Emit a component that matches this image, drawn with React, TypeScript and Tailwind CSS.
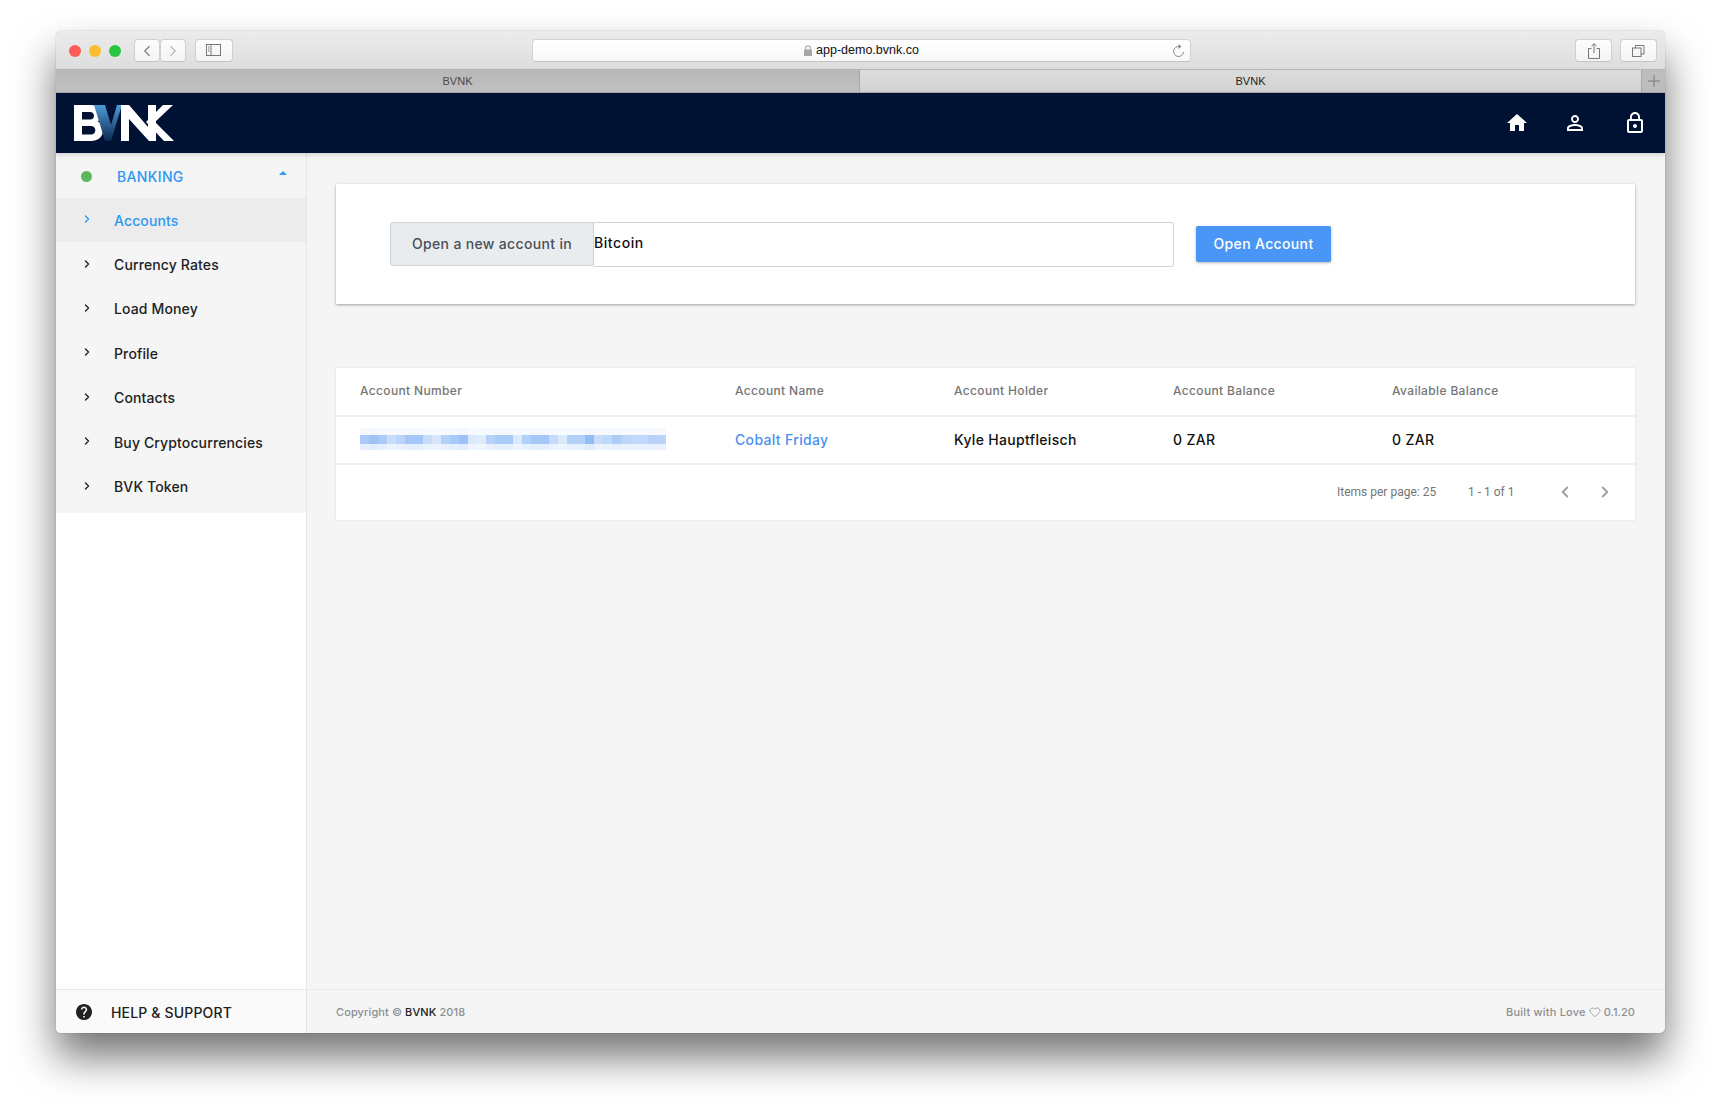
import { ChevronLeft, ChevronRight, Heart } from "lucide-react";

const menu = ["Accounts", "Currency Rates", "Load Money", "Profile", "Contacts", "Buy Cryptocurrencies", "BVK Token"];

// opacity of each pixel block of the blurred account number
const blocks = [
  0.47, 0.55, 0.47, 0.3, 0.38, 0.5, 0.5, 0.3, 0.22, 0.42, 0.47, 0.55, 0.2, 0.17, 0.4, 0.47, 0.47,
  0.2, 0.42, 0.5, 0.5, 0.33, 0.2, 0.42, 0.42, 0.6, 0.3, 0.35, 0.45, 0.37, 0.35, 0.35, 0.4,
  0.38,
];

function Logo() {
  return (
    <svg width="101" height="38" viewBox="0 0 101 38" className="block">
      <defs>
        <linearGradient id="vee" x1="0" y1="0" x2="0" y2="1">
          <stop offset="0" stopColor="#4f9ad6" />
          <stop offset="1" stopColor="#0b2a52" />
        </linearGradient>
      </defs>
      <path
        fillRule="evenodd"
        fill="#fff"
        d="M0 1h17c7 0 11 3.500 11 9 0 3.500-2 6-4.500 7.500 3.500 1.200 5.500 4.500 5.500 8.500 0 7-5 11-12 11H0z M8 8v7.500h8c2.500 0 4-1.500 4-3.800C20 9.400 18.500 8 16 8z M8 22v8.500h9c2.700 0 4.300-1.600 4.300-4.200 0-2.700-1.600-4.300-4.300-4.300z"
      />
      <path fill="url(#vee)" d="M20 1h11l6 20 6-20h5L37 37h-6z" />
      <path fill="#fff" d="M47 1h8l19 22V1h8v36h-7L55 15v22h-8z" />
      <path fill="#fff" d="M72 18 89 1h10L81 18l19 19H90z" />
    </svg>
  );
}

function Blur() {
  return (
    <svg width="306" height="22" viewBox="0 0 306 22" className="block">
      {blocks.map((o, i) => (
        <g key={i} fill="#4a8ff0">
          <rect x={i * 9} y="0" width="9" height="7" fillOpacity={0.03 + o * 0.05} />
          <rect x={i * 9} y="7" width="9" height="9" fillOpacity={o} />
          <rect x={i * 9} y="16" width="9" height="6" fillOpacity={0.05 + o * 0.2} />
        </g>
      ))}
    </svg>
  );
}

function ToolButton({ className, children }: { className: string; children: React.ReactNode }) {
  return (
    <div className={`h-[23px] rounded-[4px] bg-gradient-to-b from-[#fdfdfd] to-[#f3f3f3] border border-[#d0d0d0] border-b-[#c4c4c4] flex items-center justify-center ${className}`}>
      {children}
    </div>
  );
}

export default function App() {
  return (
    <div className="h-[1113px] bg-white pt-[31px] px-[56px] overflow-hidden font-['Inter',sans-serif]">
      <div className="h-[1002px] rounded-[5px] overflow-hidden flex flex-col bg-[#f5f5f5] shadow-[0_24px_42px_rgba(0,0,0,0.55),0_0_1px_rgba(0,0,0,0.5)]">
        {/* Safari toolbar */}
        <div className="h-[39px] shrink-0 flex items-center pt-[1px] pl-[13px] pr-[8px] bg-gradient-to-b from-[#ececec] to-[#dddddd] border-b border-[#b4b4b4] font-['Liberation_Sans',sans-serif]">
          <div className="flex gap-[8px]">
            <div className="w-[12px] h-[12px] rounded-full bg-[#fc5b57]" />
            <div className="w-[12px] h-[12px] rounded-full bg-[#fdbc2e]" />
            <div className="w-[12px] h-[12px] rounded-full bg-[#27c840]" />
          </div>
          <ToolButton className="w-[26px] ml-[13px]">
            <ChevronLeft className="w-[18px] h-[18px] text-[#7c7c7c]" strokeWidth={1.5} />
          </ToolButton>
          <ToolButton className="w-[26px]">
            <ChevronRight className="w-[18px] h-[18px] text-[#b9b9b9]" strokeWidth={1.5} />
          </ToolButton>
          <ToolButton className="w-[38px] ml-[9px]">
            <svg width="16" height="13" viewBox="0 0 16 13" fill="none" stroke="#777">
              <rect x="0.5" y="0.5" width="14" height="11" />
              <path d="M5 .5v11M2 3h1.500M2 5h1.500M2 7h1.500" />
            </svg>
          </ToolButton>
          <div className="w-[659px] ml-[299px] h-[23px] rounded-[4px] bg-gradient-to-b from-[#ffffff] to-[#f8f8f8] border border-[#d2d2d2] border-b-[#c4c4c4] relative flex items-center justify-center gap-[3px] text-[12.5px] text-[#111]">
            <svg width="9" height="11" viewBox="0 0 9 11" fill="none">
              <rect y="4.500" width="8" height="6.500" fill="#a6a6a6" />
              <path d="M1.700 4.500V3a2.300 2.300 0 0 1 4.600 0v1.500" stroke="#a6a6a6" strokeWidth="1.100" />
            </svg>
            <span>app-demo.bvnk.co</span>
            <svg className="absolute right-[5px] top-[4px]" width="13" height="14" viewBox="0 0 13 14" fill="none" stroke="#8a8a8a">
              <path d="M7.500 2.600A5 5 0 1 0 11.500 8" />
              <path d="M6.500 0v5l3-2.500z" fill="#8a8a8a" stroke="none" />
            </svg>
          </div>
          <ToolButton className="w-[37px] ml-[384px]">
            <svg width="12" height="16" viewBox="0 0 12 16" fill="none" stroke="#777">
              <path d="M3.500 5.500H.5v10h11v-10h-3M6 10V1M3.500 3 6 .7 8.500 3" />
            </svg>
          </ToolButton>
          <ToolButton className="w-[37px] ml-[8px]">
            <svg width="13" height="12" viewBox="0 0 13 12" fill="none" stroke="#777">
              <rect x="0.500" y="3" width="8.500" height="8.500" />
              <path d="M3.500 3V.5H12V9H9" />
            </svg>
          </ToolButton>
        </div>

        {/* Tabs */}
        <div className="h-[23px] shrink-0 flex text-[11px] font-['Liberation_Sans',sans-serif] border-b border-[#a9a9a9]">
          <div className="w-[804px] bg-gradient-to-b from-[#b8b8b8] to-[#c0c0c0] text-[#4a4a4a] flex items-center justify-center border-r border-[#a9a9a9]">BVNK</div>
          <div className="flex-1 bg-gradient-to-b from-[#dcdcdc] to-[#d2d2d2] text-[#222] flex items-center justify-center">BVNK</div>
          <div className="w-[24px] bg-[#bdbdbd] border-l border-[#a9a9a9] flex items-center justify-center">
            <svg width="12" height="12" viewBox="0 0 12 12" stroke="#7a7a7a"><path d="M6 0v12M0 6h12" /></svg>
          </div>
        </div>

        {/* App header */}
        <header className="h-[60px] shrink-0 bg-[#001233] flex items-center relative z-10 shadow-[0_2px_5px_rgba(0,0,0,0.15)]">
          <div className="ml-[18px] mb-[1px]"><Logo /></div>
          <div className="ml-auto flex items-center text-white">
            <svg width="24" height="24" viewBox="0 0 24 24" fill="currentColor" className="mr-[34px]">
              <path d="M10 20v-6h4v6h5v-8h3L12 3 2 12h3v8z" />
            </svg>
            <svg width="24" height="24" viewBox="0 0 24 24" fill="currentColor" className="mr-[36px]">
              <path d="M12 5.900c1.160 0 2.100.940 2.100 2.100s-.940 2.100-2.100 2.100S9.900 9.160 9.900 8s.940-2.100 2.100-2.100m0 9c2.970 0 6.100 1.460 6.100 2.100v1.100H5.900V17c0-.640 3.130-2.100 6.100-2.100M12 4C9.790 4 8 5.790 8 8s1.790 4 4 4 4-1.790 4-4-1.790-4-4-4zm0 9c-2.670 0-8 1.340-8 4v3h16v-3c0-2.660-5.330-4-8-4z" />
            </svg>
            <svg width="24" height="24" viewBox="0 0 24 24" fill="currentColor" className="mr-[18px]">
              <path d="M12 17c1.100 0 2-.900 2-2s-.900-2-2-2-2 .900-2 2 .900 2 2 2zm6-9h-1V6c0-2.760-2.240-5-5-5S7 3.240 7 6v2H6c-1.100 0-2 .900-2 2v10c0 1.100.900 2 2 2h12c1.100 0 2-.900 2-2V10c0-1.100-.900-2-2-2zM8.900 6c0-1.710 1.390-3.100 3.100-3.100s3.100 1.390 3.100 3.100v2H8.900V6zM18 20H6V10h12v10z" />
            </svg>
          </div>
        </header>

        <div className="flex-1 flex min-h-0">
          {/* Sidebar */}
          <aside className="w-[251px] shrink-0 bg-white border-r border-[#e6e6e6] flex flex-col">
            <div className="bg-[#f5f5f5] pb-[4px]">
              <div className="h-[45px] flex items-center pl-[25px] pr-[19px]">
                <div className="w-[11px] h-[11px] rounded-full bg-[#5cb85c] mt-[1px]" />
                <span className="ml-[25px] pt-[1px] text-[14px] font-medium tracking-[0.35px] text-[#2f96f3]">BANKING</span>
                <svg width="8" height="4" viewBox="0 0 8 4" className="ml-auto mb-[5px]" fill="#2f96f3"><path d="M4 0 8 4H0z" /></svg>
              </div>
              {menu.map((item, i) => (
                <div key={item} className={`h-[44.4px] flex items-center pl-[25px] ${i === 0 ? "bg-[#ececec] text-[#2f96f3]" : "text-[#212121]"}`}>
                  <ChevronRight className="w-[12px] h-[12px] mb-[2px]" strokeWidth={2.75} />
                  <span className="ml-[21px] text-[14px] font-medium tracking-[0.13px]">{item}</span>
                </div>
              ))}
            </div>
            <div className="mt-auto h-[44px] bg-[#fafafa] border-t border-[#e6e6e6] flex items-center pl-[20px]">
              <svg width="16" height="16" viewBox="2 2 20 20" fill="#212121">
                <path d="M12 2C6.480 2 2 6.480 2 12s4.480 10 10 10 10-4.480 10-10S17.520 2 12 2zm1 17h-2v-2h2v2zm2.070-7.750-.900.920C13.450 12.900 13 13.500 13 15h-2v-.500c0-1.100.450-2.100 1.170-2.830l1.240-1.260c.370-.360.590-.860.590-1.410 0-1.100-.900-2-2-2s-2 .900-2 2H8c0-2.210 1.790-4 4-4s4 1.790 4 4c0 .880-.360 1.680-.930 2.250z" />
              </svg>
              <span className="ml-[19px] pt-[1px] text-[14px] font-medium tracking-[0.17px] text-[#212121]">HELP &amp; SUPPORT</span>
            </div>
          </aside>

          {/* Main */}
          <main className="flex-1 flex flex-col min-w-0">
            <div className="flex-1 pt-[31px] pl-[29px] pr-[30px]">
              <section className="h-[120px] bg-white rounded-[1px] shadow-[0_1px_3px_rgba(0,0,0,0.35)] flex items-center pl-[54px]">
                <div className="w-[204px] h-[44px] bg-[#e9ecef] border border-[#ced4da] rounded-l-[3px] flex items-center justify-center pb-[2px] text-[14px] font-medium tracking-[0.33px] text-[#495057]">
                  Open a new account in
                </div>
                <div className="w-[580px] h-[45px] bg-white border border-l-0 border-[#ced4da] rounded-r-[3px] flex items-center pb-[4px] text-[14px] font-medium tracking-[0.55px] text-[#111]">
                  Bitcoin
                </div>
                <button className="ml-[22px] w-[135px] h-[36px] pb-[2px] bg-[#4a96f6] rounded-[2px] shadow-[0_1px_3px_rgba(0,0,0,0.3)] text-white text-[14px] font-medium tracking-[0.35px]">
                  Open Account
                </button>
              </section>

              <section className="mt-[64px] bg-white shadow-[0_0_2px_rgba(0,0,0,0.12)]">
                <div className="h-[49px] px-[24px] pb-[1px] grid grid-cols-[375px_219px_219px_219px_1fr] items-center border-b-2 border-[#f0f0f0] text-[12px] font-medium tracking-[0.35px] text-[#757575]">
                  <div>Account Number</div>
                  <div>Account Name</div>
                  <div>Account Holder</div>
                  <div>Account Balance</div>
                  <div>Available Balance</div>
                </div>
                <div className="h-[48px] px-[24px] pb-[2px] grid grid-cols-[375px_219px_219px_219px_1fr] items-center border-b-2 border-[#f0f0f0] text-[14px] font-medium tracking-[0.33px] text-[#111]">
                  <Blur />
                  <div className="text-[#4a8ff0]">Cobalt Friday</div>
                  <div>Kyle Hauptfleisch</div>
                  <div>0 ZAR</div>
                  <div>0 ZAR</div>
                </div>
                <div className="h-[55px] pb-[2px] flex items-center font-['Roboto',sans-serif] text-[12px] text-[#757575] pl-[1001px]">
                  <span className="w-[131px]">Items per page: 25</span>
                  <span className="w-[88px]">1 - 1 of 1</span>
                  <ChevronLeft className="w-[18px] h-[18px] text-[#9e9e9e]" strokeWidth={2.5} />
                  <ChevronRight className="w-[18px] h-[18px] ml-[22px] text-[#9e9e9e]" strokeWidth={2.5} />
                </div>
              </section>
            </div>

            <footer className="h-[44px] shrink-0 mx-0 pl-[29px] pr-[30px] pt-[1px] border-t border-[#e8e8e8] flex items-center justify-between text-[11px] font-medium tracking-[0.1px] text-[#8a8f94]">
              <div>Copyright © <span className="text-[#212121]">BVNK</span> 2018</div>
              <div className="flex items-center gap-[3px] tracking-[0.2px]">
                Built with Love
                <Heart className="w-[12px] h-[12px] mb-[1px]" strokeWidth={1.5} />
                <span className="tracking-[0.05px]">0.1.20</span>
              </div>
            </footer>
          </main>
        </div>
      </div>
    </div>
  );
}
